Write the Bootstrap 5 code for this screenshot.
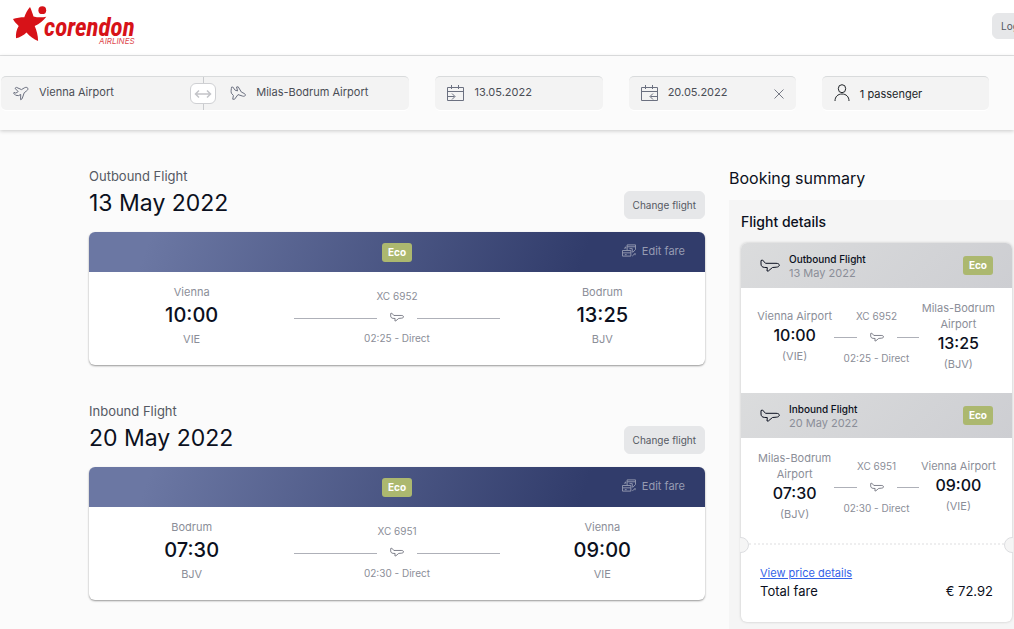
<!DOCTYPE html>
<html lang="en">
<head>
<meta charset="utf-8">
<meta name="viewport" content="width=device-width, initial-scale=1">
<title>Corendon Airlines – Booking</title>
<link href="https://cdn.jsdelivr.net/npm/bootstrap@5.3.0/dist/css/bootstrap.min.css" rel="stylesheet">
<style>
  body { font-family: Inter, "Liberation Sans", sans-serif; font-size: 12px; line-height: 16px; color: #0b1020; background: #fbfbfb; overflow-x: hidden; }
  svg { fill: none; stroke: currentColor; flex: none; display: block; }
  .site-head { height: 56px; background: #fff; border-bottom: 1px solid #e3e4e5; padding-left: 12px; overflow: hidden; }
  .brand { color: #d71218; text-decoration: none; padding-bottom: 6px; }
  .brand-mark { fill: #d71218; stroke: none; }
  .brand-text { margin-left: -4px; padding-top: 10px; }
  .brand-name { font: italic 700 25px/23px "Liberation Sans Narrow", "Roboto Condensed", "DejaVu Sans Condensed", sans-serif; display: block; }
  .brand-sub { font: italic 400 8px/5px Inter, sans-serif; display: block; text-align: right; opacity: .8; }
  .btn-soft { --bs-btn-bg: #e6e7e9; --bs-btn-color: #555963; --bs-btn-border-color: #e6e7e9; --bs-btn-hover-bg: #dcdde0; --bs-btn-font-size: 10px; --bs-btn-line-height: 16px; --bs-btn-padding-x: 8px; --bs-btn-padding-y: 5px; --bs-btn-border-radius: 6px; white-space: nowrap; }
  .login { width: 52px; height: 26px; padding-top: 4px; margin-right: -30px; margin-bottom: 4px; text-align: left; }
  .search-bar { display: grid; grid-template-columns: 408fr 167fr 167fr 167fr; gap: 26px; padding: 20px 25px 20px 1px; box-shadow: 0 1px 4px #0003; }
  .field-box { height: 34px; background: #f3f3f3; border: 0; border-top: 1px solid #d9dbdc; border-radius: 5px; box-shadow: 0 1px 0 #fff; color: #6b7080; padding: 0 12px; gap: 10px; min-width: 0; font-size: 11px; }
  .field-box input { flex: 1; min-width: 0; width: 0; border: 0; padding: 0 0 3px; background: transparent; color: #4a4d55; font-size: 11px; line-height: 16px; outline-offset: 2px; }
  .field-box > svg { margin-bottom: 2px; }
  .swap-wrap { align-self: stretch; background: linear-gradient(#c9cbce, #c9cbce) center / 1px 100% no-repeat; }
  .swap { width: 26px; height: 21px; padding: 0; border: 1px solid #cfd0d3; border-radius: 6px; background: #fff; color: #c3c4c8; }
  .bare { border: 0; background: transparent; padding: 0; }
  .page-cols { display: grid; grid-template-columns: 616fr 285fr; gap: 24px; padding-left: 89px; }
  .leg { padding-top: 36px; margin-bottom: 10px; }
  .leg + .leg { padding-top: 26px; }
  .leg-top { margin-bottom: 13px; }
  .leg-kind { font-size: 13px; line-height: 20px; color: #555963; }
  .leg-date { font-size: 23px; line-height: 33px; font-weight: 400; margin: 0; padding-top: 1px; margin-bottom: -1px; }
  .ticket { background: #fff; border-radius: 6px; overflow: hidden; box-shadow: 0 1px 2px #0006; }
  .ticket-head { height: 40px; display: grid; grid-template-columns: 1fr auto 1fr; align-items: center; background: linear-gradient(110deg, #6b77a3 10%, #313c6b 80%); }
  .fare-tag { display: block; background: #acb86f; color: #fff; font-size: 10px; font-weight: 700; line-height: 19px; border-radius: 3px; padding: 0 6px; }
  .edit { justify-self: end; margin-right: 20px; padding-bottom: 3px; color: #969bb2; font-size: 11px; gap: 6px; }
  .route { display: grid; grid-template-columns: 1fr 1fr 1fr; align-items: center; text-align: center; height: 93px; padding-bottom: 5px; color: #8b8e98; }
  .place { font-size: 11px; line-height: 16px; }
  .clock { font-size: 20px; line-height: 30px; font-weight: 500; color: #0b1020; }
  .code { font-size: 11px; line-height: 18px; }
  .hop { font-size: 10px; line-height: 16px; padding-top: 2px; }
  .hop-line { gap: 13px; height: 26px; color: #4a4d5b; }
  .hop-line::before, .hop-line::after { content: ""; flex: 1; height: 1px; background: #aeb0b8; margin-top: 2px; }
  .sum-title { font-size: 16px; line-height: 24px; font-weight: 400; margin: 36px 0 10px; }
  .sum-panel { background: #f5f5f5; padding: 11px 2px 8px 12px; min-height: calc(100vh - 201px); }
  .sum-sub { font-size: 14px; line-height: 22px; font-weight: 500; margin: 0 0 10px; }
  .sum-card { background: #fff; border-radius: 6px; box-shadow: 0 0 3px #0003; }
  .sum-head { height: 45px; padding: 0 19px; gap: 9px; background: linear-gradient(135deg, #dbdcdd, #cdced2); }
  .sum-head:first-child { border-radius: 6px 6px 0 0; }
  .sum-kind { font-size: 10px; line-height: 14px; font-weight: 500; }
  .sum-date { font-size: 11px; line-height: 14px; color: #8b8e98; }
  .sum-route { height: 105px; padding: 0 14px 8px; grid-template-columns: 79fr 84fr 79fr; }
  .sum-route .clock { font-size: 16px; line-height: 22px; }
  .sum-route .code { line-height: 20px; }
  .sum-route .hop { padding: 0; }
  .tear { position: relative; border-top: 2px dotted #eeeeef; margin: 0 8px; }
  .tear::before, .tear::after { content: ""; position: absolute; top: -8px; width: 16px; height: 16px; border-radius: 50%; background: #f5f5f5; border: 1px solid #dcdde0; }
  .tear::before { left: -16px; clip-path: inset(0 0 0 7px); }
  .tear::after { right: -16px; clip-path: inset(0 7px 0 0); }
  .sum-foot { padding: 19px 19px 22px; }
  .sum-foot a { font-size: 11px; line-height: 18px; color: #3463e8; }
  .total { font-size: 13px; line-height: 18px; }
</style>
</head>
<body>
<svg class="d-none" aria-hidden="true">
  <symbol id="plane" viewBox="0 0 20 13"><path d="M1 1.500 2.500 1l3 3.300h10.500c2 0 3.300.7 3.300 1.900s-1.200 1.900-3.100 2l-3.700.3-4.200 3.500H7l.3-3.400-3-.2C2.200 8.200 1 7 1 5z" stroke-linejoin="round"/></symbol>
  <symbol id="plane-up" viewBox="0 0 16 16"><path d="M14.800 3.200c-.7-1.200-2.400-1-3.500-.3L8.500 4.600 3.500 2.400 2 3.300l3.200 3.300-2.400 1.500L1 7.400l-.6.600 2.300 2.300 3 .3 2-1.200-.1 5.300 1.500-.9 2.100-6 2.500-2c1-.7 1.500-1.600 1.100-2.600z" stroke-linejoin="round"/></symbol>
  <symbol id="plane-down" viewBox="0 0 16 16"><path d="M1.500 2.200 2.800 2l2.300 3.200 2.500.7L6.500 2l1.700-.2 3.200 5.300 2.700 1.300c1.200.6 1.500 1.500 1.100 2.200s-1.500.9-2.600.5L8 9.600l-3.500 4.700-1.800-.1.700-3.700-2-2.300C.7 6.400 1.400 4 1.500 2.200z" stroke-linejoin="round"/></symbol>
</svg>

<header class="site-head d-flex align-items-center justify-content-between">
  <a class="brand d-flex" href="#" aria-label="Corendon Airlines">
    <svg class="brand-mark" width="36" height="36" viewBox="0 0 36 36"><path d="M18 1c1.200 2.500 2.500 6 3.500 9.500 4.500 1.200 9 1 12.800.3-2.800 4-6.800 7.200-11.600 9.200 2 4.500 3.400 9.500 3.400 15-4.300-1.500-8.400-4.800-11.600-8.500-2.800 2.700-6.500 5-10.500 5.800-.4-4.600.5-8.700 2.700-12.300C4.500 17.800 2.300 15.600 1 13c3.500-1.200 7.500-1.800 11.300-1.800C13.500 7.500 15.500 4 18 1z"/><circle cx="30.300" cy="4.200" r="3.900"/></svg>
    <span class="brand-text"><span class="brand-name">corendon</span><span class="brand-sub">AIRLINES</span></span>
  </a>
  <button class="btn btn-soft login" type="button">Log in</button>
</header>

<form class="search-bar">
  <div class="field-box d-flex align-items-center">
    <svg width="16" height="16"><use href="#plane-up"/></svg>
    <input type="text" value="Vienna Airport" aria-label="From">
    <span class="swap-wrap d-flex align-items-center"><button class="swap d-flex align-items-center justify-content-center" type="button" aria-label="Swap airports"><svg width="18" height="10" viewBox="0 0 18 10" stroke-width="1.500"><path d="M1.500 5h15M5 1.500 1.500 5 5 8.500M13 1.500 16.500 5 13 8.500"/></svg></button></span>
    <svg class="ms-1" width="16" height="16"><use href="#plane-down"/></svg>
    <input type="text" value="Milas-Bodrum Airport" aria-label="To">
  </div>
  <div class="field-box d-flex align-items-center">
    <svg width="17" height="18" viewBox="0 0 17 18"><path d="M.5 3.500h16v13H.5zM.5 7.500h16M4.500 1v4M11.500 1v4M1 12.500h6.500M5 9.500l3 3-3 3"/></svg>
    <input type="text" value="13.05.2022" aria-label="Departure date">
  </div>
  <div class="field-box d-flex align-items-center">
    <svg width="17" height="18" viewBox="0 0 17 18"><path d="M.5 3.500h16v13H.5zM.5 7.500h16M4.500 1v4M11.500 1v4M16 12.500H9.500M12 9.500l-3 3 3 3"/></svg>
    <input type="text" value="20.05.2022" aria-label="Return date">
    <button class="bare" type="button" aria-label="Clear return date"><svg width="10" height="10" viewBox="0 0 10 10" color="#777b86"><path d="m.5.5 9 9M9.500.5l-9 9"/></svg></button>
  </div>
  <button class="field-box d-flex align-items-center text-dark" type="button">
    <svg width="16" height="17" viewBox="0 0 16 17"><ellipse cx="8" cy="4.700" rx="3.700" ry="4"/><path d="M1 17c0-4.300 2.800-7 7-7s7 2.700 7 7"/></svg>
    1 passenger
  </button>
</form>

<main class="page-cols">
  <div>
    <section class="leg">
      <div class="leg-top d-flex justify-content-between align-items-end">
        <div><div class="leg-kind">Outbound Flight</div><h2 class="leg-date">13 May 2022</h2></div>
        <button class="btn btn-soft" type="button">Change flight</button>
      </div>
      <article class="ticket">
        <div class="ticket-head"><span></span><span class="fare-tag">Eco</span>
          <button class="bare edit d-flex align-items-center" type="button"><svg width="14" height="13" viewBox="0 0 15 13"><path d="M.5 6.500h9v6h-9zM.5 9h9M3 11h2M2.500 4.500 4 2.500v2M5.500 6V.5h9v5l-3 3M5.500 2.500h9M8 4.500h3v4M11 12.500l3-3v2"/></svg>Edit fare</button></div>
        <div class="route">
          <div><div class="place">Vienna</div><div class="clock">10:00</div><div class="code">VIE</div></div>
          <div class="hop"><div>XC 6952</div><div class="hop-line d-flex align-items-center"><svg width="14" height="10"><use href="#plane"/></svg></div><div>02:25 - Direct</div></div>
          <div><div class="place">Bodrum</div><div class="clock">13:25</div><div class="code">BJV</div></div>
        </div>
      </article>
    </section>
    <section class="leg">
      <div class="leg-top d-flex justify-content-between align-items-end">
        <div><div class="leg-kind">Inbound Flight</div><h2 class="leg-date">20 May 2022</h2></div>
        <button class="btn btn-soft" type="button">Change flight</button>
      </div>
      <article class="ticket">
        <div class="ticket-head"><span></span><span class="fare-tag">Eco</span>
          <button class="bare edit d-flex align-items-center" type="button"><svg width="14" height="13" viewBox="0 0 15 13"><path d="M.5 6.500h9v6h-9zM.5 9h9M3 11h2M2.500 4.500 4 2.500v2M5.500 6V.5h9v5l-3 3M5.500 2.500h9M8 4.500h3v4M11 12.500l3-3v2"/></svg>Edit fare</button></div>
        <div class="route">
          <div><div class="place">Bodrum</div><div class="clock">07:30</div><div class="code">BJV</div></div>
          <div class="hop"><div>XC 6951</div><div class="hop-line d-flex align-items-center"><svg width="14" height="10"><use href="#plane"/></svg></div><div>02:30 - Direct</div></div>
          <div><div class="place">Vienna</div><div class="clock">09:00</div><div class="code">VIE</div></div>
        </div>
      </article>
    </section>
  </div>

  <aside>
    <h2 class="sum-title">Booking summary</h2>
    <div class="sum-panel">
      <h3 class="sum-sub">Flight details</h3>
      <div class="sum-card">
        <div class="sum-head d-flex align-items-center">
          <svg width="20" height="13"><use href="#plane"/></svg>
          <div class="me-auto"><div class="sum-kind">Outbound Flight</div><div class="sum-date">13 May 2022</div></div>
          <span class="fare-tag">Eco</span>
        </div>
        <div class="route sum-route">
          <div><div class="place">Vienna Airport</div><div class="clock">10:00</div><div class="code">(VIE)</div></div>
          <div class="hop"><div>XC 6952</div><div class="hop-line d-flex align-items-center"><svg width="14" height="10"><use href="#plane"/></svg></div><div>02:25 - Direct</div></div>
          <div><div class="place">Milas-Bodrum Airport</div><div class="clock">13:25</div><div class="code">(BJV)</div></div>
        </div>
        <div class="sum-head d-flex align-items-center">
          <svg width="20" height="13"><use href="#plane"/></svg>
          <div class="me-auto"><div class="sum-kind">Inbound Flight</div><div class="sum-date">20 May 2022</div></div>
          <span class="fare-tag">Eco</span>
        </div>
        <div class="route sum-route">
          <div><div class="place">Milas-Bodrum Airport</div><div class="clock">07:30</div><div class="code">(BJV)</div></div>
          <div class="hop"><div>XC 6951</div><div class="hop-line d-flex align-items-center"><svg width="14" height="10"><use href="#plane"/></svg></div><div>02:30 - Direct</div></div>
          <div><div class="place">Vienna Airport</div><div class="clock">09:00</div><div class="code">(VIE)</div></div>
        </div>
        <div class="tear"></div>
        <div class="sum-foot">
          <a href="#">View price details</a>
          <div class="total d-flex justify-content-between"><span>Total fare</span><span>€ 72.92</span></div>
        </div>
      </div>
    </div>
  </aside>
</main>
<script src="https://cdn.jsdelivr.net/npm/bootstrap@5.3.0/dist/js/bootstrap.bundle.min.js"></script>
</body>
</html>
